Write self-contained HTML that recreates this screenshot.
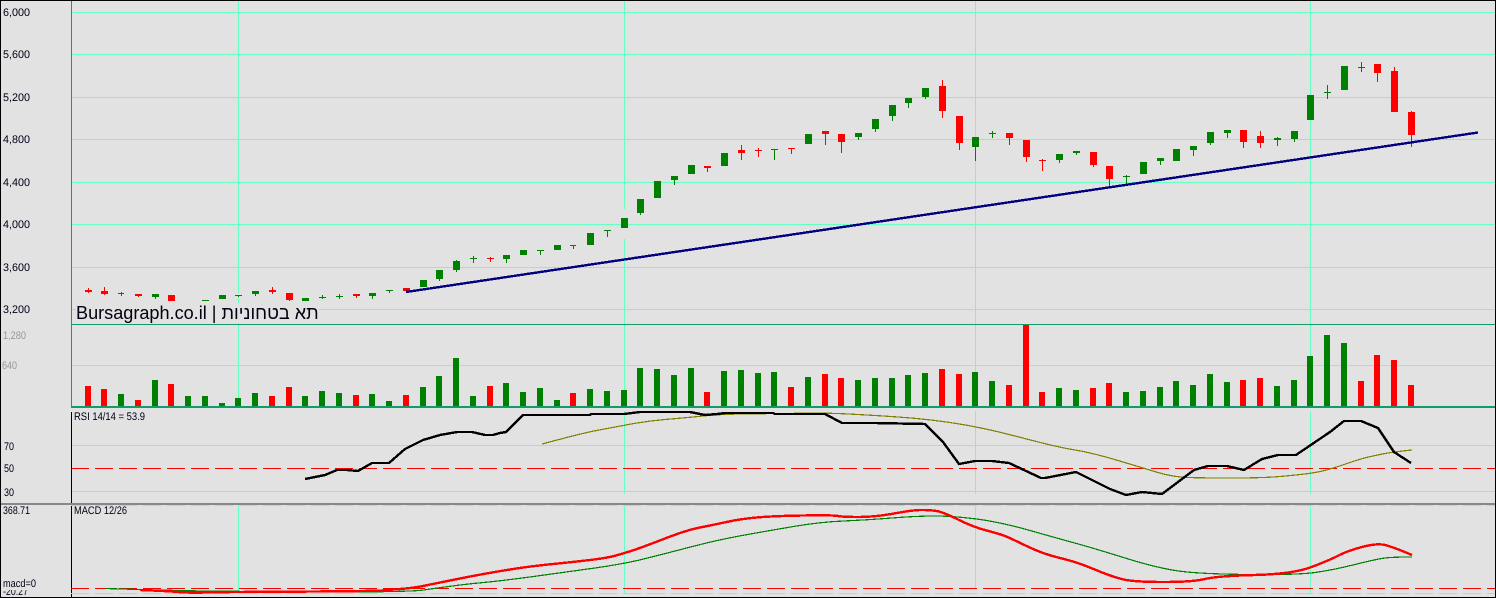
<!DOCTYPE html>
<html>
<head>
<meta charset="utf-8">
<style>
html,body{margin:0;padding:0;width:1496px;height:598px;overflow:hidden;background:#e2e2e2}
svg{position:absolute;left:0;top:0;display:block}
text{font-family:"Liberation Sans",sans-serif;font-size:11px;fill:#000018}
.g{fill:#98989e}
#t{position:absolute;left:76px;top:303px;width:243px;height:20px;background:#e2e2e2;font:18.1px/20px "Liberation Sans",sans-serif;color:#000010;white-space:nowrap;overflow:hidden}
</style>
</head>
<body>
<svg width="1496" height="598" viewBox="0 0 1496 598" xmlns="http://www.w3.org/2000/svg" shape-rendering="crispEdges">
<rect width="1496" height="598" fill="#e2e2e2"/>
<path fill="#66ffc4" d="M72 12h1423v1H72zM72 54h1423v1H72zM72 97h1423v1H72zM72 139h1423v1H72zM72 182h1423v1H72zM72 224h1423v1H72zM72 267h1423v1H72zM72 309h1423v1H72z"/>
<path fill="#66ffc4" d="M238 0h1v293h-1zM624 0h1v209h-1zM624 239h1v85h-1zM975 0h1v324h-1zM1310 0h1v324h-1z"/>
<path fill="#66ffc4" d="M238 298h1v26h-1zM238 325h1v73h-1zM624 325h1v65h-1zM975 325h1v47h-1zM1310 325h1v31h-1z"/>
<path fill="#7ff5cc" d="M72 365h1423v1H72z"/>
<path fill="#119c6c" d="M71 1h1v407h-1zM71 324h1424v1H71zM71 406h1424v2H71z"/>
<path fill="#008000" d="M152 294h7v3h-7zM155 294h1v5h-1zM202 300h7v1h-7zM219 295h7v4h-7zM235 295h7v1h-7zM238 295h1v2h-1zM252 291h7v3h-7zM255 291h1v5h-1zM302 298h7v3h-7zM319 297h7v1h-7zM322 295h1v4h-1zM336 296h7v1h-7zM339 294h1v5h-1zM369 293h7v3h-7zM372 293h1v6h-1zM386 290h7v1h-7zM389 290h1v3h-1zM420 280h7v7h-7zM436 270h7v9h-7zM439 270h1v11h-1zM453 261h7v9h-7zM456 260h1v12h-1zM470 258h7v1h-7zM473 256h1v7h-1zM503 255h7v4h-7zM506 255h1v8h-1zM520 250h7v5h-7zM537 250h7v1h-7zM540 250h1v5h-1zM554 245h7v5h-7zM587 233h7v12h-7zM604 230h7v1h-7zM607 230h1v7h-1zM621 218h7v10h-7zM637 199h7v14h-7zM640 199h1v16h-1zM654 181h7v17h-7zM671 176h7v4h-7zM674 176h1v9h-1zM688 165h7v9h-7zM721 153h7v13h-7zM771 149h7v1h-7zM774 149h1v11h-1zM805 134h7v10h-7zM855 133h7v4h-7zM858 133h1v7h-1zM872 119h7v10h-7zM875 119h1v13h-1zM889 105h7v11h-7zM892 105h1v16h-1zM905 98h7v5h-7zM908 98h1v10h-1zM922 88h7v9h-7zM925 88h1v11h-1zM972 137h7v10h-7zM975 137h1v24h-1zM989 133h7v1h-7zM992 131h1v7h-1zM1056 154h7v6h-7zM1059 154h1v9h-1zM1073 151h7v2h-7zM1076 151h1v4h-1zM1123 176h7v1h-7zM1126 175h1v9h-1zM1140 162h7v12h-7zM1157 158h7v3h-7zM1160 158h1v7h-1zM1173 149h7v12h-7zM1190 146h7v4h-7zM1193 146h1v10h-1zM1207 132h7v11h-7zM1210 132h1v13h-1zM1224 130h7v3h-7zM1227 130h1v8h-1zM1274 138h7v2h-7zM1277 137h1v9h-1zM1291 131h7v8h-7zM1294 131h1v11h-1zM1307 95h7v25h-7zM1324 92h7v1h-7zM1327 85h1v14h-1zM1341 66h7v24h-7zM1358 67h7v1h-7zM1361 62h1v10h-1z"/>
<path fill="#ff0000" d="M85 290h7v2h-7zM88 288h1v5h-1zM101 291h7v3h-7zM104 287h1v8h-1zM118 293h6v1h-6zM121 292h1v4h-1zM135 294h7v2h-7zM138 294h1v3h-1zM168 295h7v6h-7zM269 290h7v2h-7zM272 287h1v7h-1zM286 293h7v7h-7zM289 293h1v8h-1zM353 294h7v2h-7zM356 294h1v4h-1zM403 288h7v3h-7zM487 258h7v1h-7zM490 257h1v5h-1zM570 245h6v1h-6zM573 245h1v4h-1zM704 166h7v2h-7zM707 166h1v6h-1zM738 150h7v3h-7zM741 145h1v15h-1zM755 150h7v1h-7zM758 148h1v9h-1zM788 148h7v1h-7zM791 148h1v6h-1zM822 131h7v3h-7zM825 131h1v14h-1zM838 134h7v8h-7zM841 134h1v19h-1zM939 86h7v25h-7zM942 80h1v38h-1zM956 116h7v27h-7zM959 116h1v34h-1zM1006 133h7v5h-7zM1009 133h1v12h-1zM1023 140h7v17h-7zM1026 140h1v22h-1zM1039 160h7v1h-7zM1042 159h1v12h-1zM1090 152h7v13h-7zM1093 152h1v15h-1zM1106 166h7v13h-7zM1109 166h1v21h-1zM1240 130h7v12h-7zM1243 130h1v18h-1zM1257 136h7v7h-7zM1260 131h1v17h-1zM1374 64h7v9h-7zM1377 64h1v18h-1zM1391 71h7v41h-7zM1394 67h1v45h-1zM1408 112h7v23h-7zM1411 111h1v36h-1z"/>
<line x1="406" y1="292" x2="1478" y2="132.5" stroke="#000080" stroke-width="2.4"/>
<path fill="#008000" d="M118 394h6v12h-6zM152 380h6v26h-6zM185 396h6v10h-6zM202 396h6v10h-6zM219 403h6v3h-6zM235 398h6v8h-6zM252 393h6v13h-6zM302 396h6v10h-6zM319 391h6v15h-6zM336 393h6v13h-6zM369 394h6v12h-6zM386 401h6v5h-6zM420 387h6v19h-6zM436 376h6v30h-6zM453 358h6v48h-6zM470 396h6v10h-6zM503 383h6v23h-6zM520 392h6v14h-6zM537 388h6v18h-6zM554 400h6v6h-6zM587 389h6v17h-6zM604 391h6v15h-6zM621 390h6v16h-6zM637 368h6v38h-6zM654 369h6v37h-6zM671 375h6v31h-6zM688 368h6v38h-6zM721 371h6v35h-6zM738 370h6v36h-6zM755 373h6v33h-6zM771 372h6v34h-6zM805 377h6v29h-6zM855 380h6v26h-6zM872 378h6v28h-6zM889 378h6v28h-6zM905 375h6v31h-6zM922 373h6v33h-6zM972 372h6v34h-6zM989 381h6v25h-6zM1056 388h6v18h-6zM1073 390h6v16h-6zM1123 392h6v14h-6zM1140 391h6v15h-6zM1157 387h6v19h-6zM1173 381h6v25h-6zM1190 385h6v21h-6zM1207 374h6v32h-6zM1224 382h6v24h-6zM1274 386h6v20h-6zM1291 380h6v26h-6zM1307 356h6v50h-6zM1324 335h6v71h-6zM1341 343h6v63h-6z"/>
<path fill="#ff0000" d="M85 386h6v20h-6zM101 389h6v17h-6zM135 400h6v6h-6zM168 384h6v22h-6zM269 396h6v10h-6zM286 387h6v19h-6zM353 395h6v11h-6zM403 395h6v11h-6zM487 386h6v20h-6zM570 393h6v13h-6zM704 392h6v14h-6zM788 387h6v19h-6zM822 374h6v32h-6zM838 378h6v28h-6zM939 369h6v37h-6zM956 374h6v32h-6zM1006 385h6v21h-6zM1023 325h6v81h-6zM1039 392h6v14h-6zM1090 388h6v18h-6zM1106 383h6v23h-6zM1240 380h6v26h-6zM1257 378h6v28h-6zM1358 381h6v25h-6zM1374 355h6v51h-6zM1391 360h6v46h-6zM1408 385h6v21h-6z"/>
<path fill="#66ffc4" d="M72 445h1423v1H72zM72 491h1423v1H72zM624 411h1v83h-1zM975 411h1v83h-1zM1310 411h1v83h-1z"/>
<line x1="71" y1="468.5" x2="1495" y2="468.5" stroke="#ff0000" stroke-dasharray="18 6"/>
<path fill="none" stroke="#808000" stroke-width="1.2" d="M542 444Q583 433 596.5 430.5Q610 428 628.5 424.5Q647 421 665 419.5Q683 418 698 416.5Q713 415 723 414.5Q733 414 779 413.5Q825 413 837.5 413.5Q850 414 875 415.5Q900 417 916.5 418.5Q933 420 950 422.5Q967 425 983.5 428.5Q1000 432 1028.5 439.5Q1057 447 1075 450Q1093 453 1118 460.5Q1143 468 1158 472.5Q1173 477 1188 477.5Q1203 478 1233 478Q1263 478 1280 476.5Q1297 475 1308.5 473.5Q1320 472 1330 469Q1340 466 1350 462.5Q1360 459 1368.5 457Q1377 455 1385 453.5Q1393 452 1412 450"/>
<polyline fill="none" stroke="#000" stroke-width="2.4" points="305,479 325,475 337,470 347,470 358,471 372,463 389,463 405,449 423,440 440,435 457,432 472,432 485,435 493,435 500,433 506,432 523,415 590,415 591,414 624,414 640,412 690,412 705,415 717,414 725,413 773,413 775,414 825,414 842,423 875,423 925,424 943,442 959,464 975,461 992,461 1009,463 1041,478 1045,478 1076,472 1110,489 1126,495 1142,492 1162,494 1178,482 1194,470 1208,466 1227,466 1244,470 1262,459 1278,455 1296,455 1330,432 1344,421 1361,421 1378,428 1394,452 1411,463"/>
<path fill="#000" d="M71 412h1v186h-1z"/>
<line x1="71" y1="505.5" x2="1495" y2="505.5" stroke="#66ffc4" stroke-dasharray="18 6"/>
<path fill="#888" d="M1 503h1494v2H1z"/>
<path fill="#66ffc4" d="M238 505h1v87h-1zM624 505h1v88h-1zM975 505h1v83h-1zM1310 505h1v88h-1z"/>
<line x1="71" y1="593.5" x2="1495" y2="593.5" stroke="#66ffc4" stroke-dasharray="18 6"/>
<line x1="71" y1="588.5" x2="1495" y2="588.5" stroke="#ff0000" stroke-dasharray="18 6"/>
<path fill="none" stroke="#008000" stroke-width="1.2" d="M105 588.5Q187 591 220 591.2Q253 591.5 283 591.7Q313 592 340 592Q367 592 392 591.5Q417 591 423.5 590Q430 589 448.5 586.5Q467 584 483.5 582.5Q500 581 533.5 576.5Q567 572 595 568Q623 564 641.5 559.5Q660 555 688.5 547.5Q717 540 742 535.5Q767 531 793.5 526.5Q820 522 843.5 521Q867 520 892 518Q917 516 935 516Q953 516 976.5 519Q1000 522 1030 530.5Q1060 539 1076.5 543.5Q1093 548 1125 558Q1157 568 1178.5 571Q1200 574 1248.5 574.5Q1297 575 1315 572.5Q1333 570 1355 564.5Q1377 559 1385 558Q1393 557 1412 557"/>
<path fill="none" stroke="#ff0000" stroke-width="2.4" d="M140 590Q167 591 178.5 592Q190 593 205 592.5Q220 592 236.5 592Q253 592 315 591.5Q377 591 382 590.5Q387 590 400 589Q413 588 423 586Q433 584 450 580.5Q467 577 483.5 574Q500 571 516.5 568.5Q533 566 553 564Q573 562 590 560Q607 558 616 555.5Q625 553 634 550Q643 547 665 538.5Q687 530 700 527.5Q713 525 726.5 522Q740 519 756.5 517.5Q773 516 803 515.5Q833 515 838 516Q843 517 859 517Q875 517 894 513.5Q913 510 921.5 510Q930 510 936.5 511Q943 512 958 519.5Q973 527 986.5 530.5Q1000 534 1005 536Q1010 538 1026.5 546Q1043 554 1060 558Q1077 562 1093.5 569Q1110 576 1121.5 579Q1133 582 1163 582Q1193 582 1205 579Q1217 576 1255 575Q1293 574 1311.5 567Q1330 560 1338.5 555.5Q1347 551 1362 547Q1377 543 1385 545Q1393 547 1412 555"/>
<path fill="#000" d="M0 0h1496v1H0zM0 0h1v598H0zM1495 0h1v598h-1zM0 597h1496v1H0z"/>
<g text-rendering="geometricPrecision">
<text x="3" y="16" textLength="27" lengthAdjust="spacingAndGlyphs">6,000</text>
<text x="3" y="58" textLength="27" lengthAdjust="spacingAndGlyphs">5,600</text>
<text x="3" y="101" textLength="27" lengthAdjust="spacingAndGlyphs">5,200</text>
<text x="3" y="143" textLength="27" lengthAdjust="spacingAndGlyphs">4,800</text>
<text x="3" y="186" textLength="27" lengthAdjust="spacingAndGlyphs">4,400</text>
<text x="3" y="228" textLength="27" lengthAdjust="spacingAndGlyphs">4,000</text>
<text x="3" y="271" textLength="27" lengthAdjust="spacingAndGlyphs">3,600</text>
<text x="3" y="313" textLength="27" lengthAdjust="spacingAndGlyphs">3,200</text>
<text class="g" x="3" y="339" textLength="23" lengthAdjust="spacingAndGlyphs">1,280</text>
<text class="g" x="2" y="369" textLength="15" lengthAdjust="spacingAndGlyphs">640</text>
<text x="74" y="420" textLength="71" lengthAdjust="spacingAndGlyphs">RSI 14/14 = 53.9</text>
<text x="4" y="450" textLength="10" lengthAdjust="spacingAndGlyphs">70</text>
<text x="4" y="472" textLength="10" lengthAdjust="spacingAndGlyphs">50</text>
<text x="4" y="496" textLength="10" lengthAdjust="spacingAndGlyphs">30</text>
<text x="3" y="514" textLength="27" lengthAdjust="spacingAndGlyphs">368.71</text>
<text x="74" y="514" textLength="53" lengthAdjust="spacingAndGlyphs">MACD 12/26</text>
<text x="3" y="595" textLength="25" lengthAdjust="spacingAndGlyphs">-20.27</text>
<rect x="1" y="578" width="40" height="12" fill="#e2e2e2"/>
<text x="3" y="587" textLength="33" lengthAdjust="spacingAndGlyphs">macd=0</text>
</g>
</svg>
<div id="t">Bursagraph.co.il | תא בטחוניות</div>
</body>
</html>
